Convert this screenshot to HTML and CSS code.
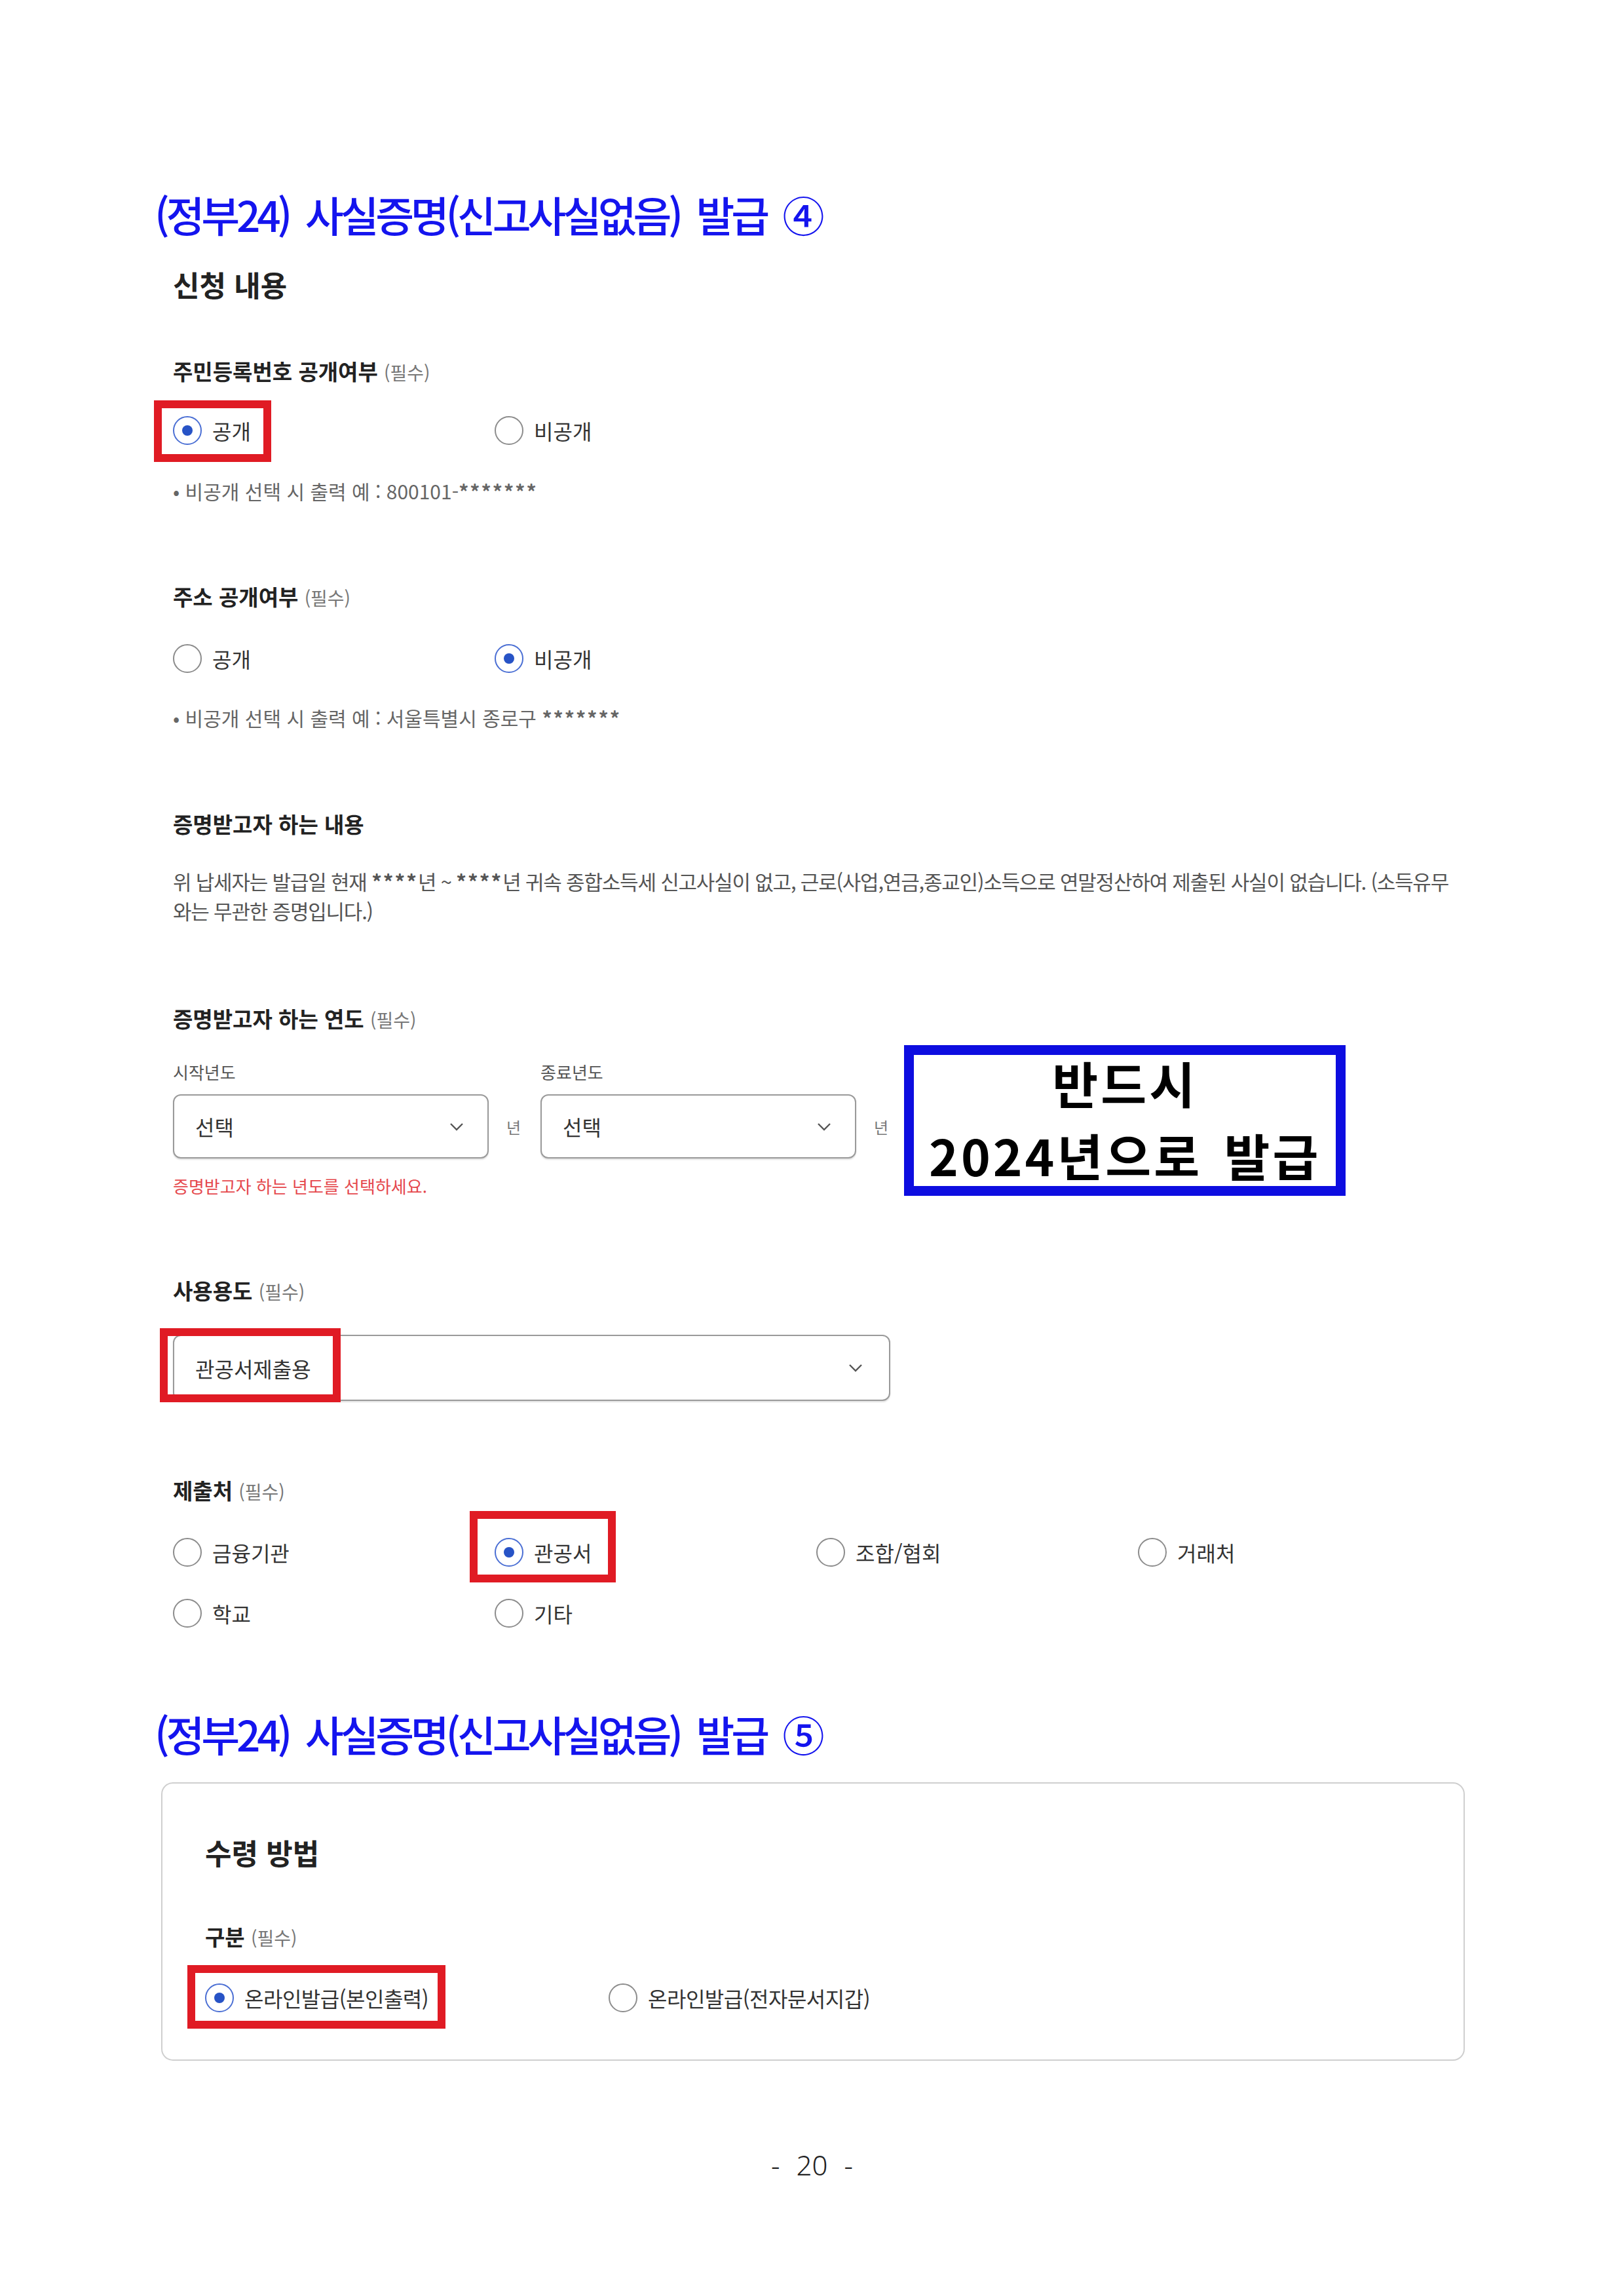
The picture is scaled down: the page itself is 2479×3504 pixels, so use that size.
FILE: index.html
```html
<!doctype html>
<html lang="ko">
  <head>
    <meta charset="UTF-8" />
    <meta name="viewport" content="width=device-width, initial-scale=1.0" />
    <title>(정부24) 사실증명(신고사실없음) 발급</title>
    <link rel="stylesheet" href="styles.css">
  </head>
  <body>
    <main class="Page">
      <h2 class="StepTitle">(정부24) 사실증명(신고사실없음) 발급 ④</h2>

      <section class="Form">
        <h3 class="Form-title">신청 내용</h3>

        <!-- 주민등록번호 -->
        <p class="Label Label--first">주민등록번호 공개여부 <span class="Label-req">(필수)</span></p>
        <div class="Radios Radios--pair">
          <label class="Radio is-checked"><span class="Radio-dot"></span>공개<span class="Mark Mark--id"></span></label>
          <label class="Radio"><span class="Radio-dot"></span>비공개</label>
        </div>
        <p class="Hint">• 비공개 선택 시 출력 예 : 800101-<span class="Stars">*******</span></p>

        <!-- 주소 -->
        <p class="Label Label--addr">주소 공개여부 <span class="Label-req">(필수)</span></p>
        <div class="Radios Radios--pair Radios--addr">
          <label class="Radio"><span class="Radio-dot"></span>공개</label>
          <label class="Radio is-checked"><span class="Radio-dot"></span>비공개</label>
        </div>
        <p class="Hint Hint--addr">• 비공개 선택 시 출력 예 : 서울특별시 종로구 <span class="Stars">*******</span></p>

        <!-- 내용 -->
        <p class="Label Label--content">증명받고자 하는 내용</p>
        <p class="Desc">위 납세자는 발급일 현재 <span class="Stars">****</span>년 ~ <span class="Stars">****</span>년 귀속 종합소득세 신고사실이 없고, 근로(사업,연금,종교인)소득으로 연말정산하여 제출된 사실이 없습니다. (소득유무<br />와는 무관한 증명입니다.)</p>

        <!-- 연도 -->
        <p class="Label Label--year">증명받고자 하는 연도 <span class="Label-req">(필수)</span></p>
        <div class="YearRow">
          <div class="YearGroup">
            <div class="YearPair">
              <div class="YearItem">
                <p class="YearItem-label">시작년도</p>
                <div class="YearItem-line">
                  <div class="Select Select--year">
                    <span>선택</span>
                    <svg class="Select-arrow" width="22" height="13" viewBox="0 0 22 13"><path d="M2 2 L11 11 L20 2" fill="none" stroke="#555" stroke-width="2.4" /></svg>
                  </div>
                  <span class="YearItem-unit">년</span>
                </div>
              </div>
              <div class="YearItem">
                <p class="YearItem-label">종료년도</p>
                <div class="YearItem-line">
                  <div class="Select Select--year">
                    <span>선택</span>
                    <svg class="Select-arrow" width="22" height="13" viewBox="0 0 22 13"><path d="M2 2 L11 11 L20 2" fill="none" stroke="#555" stroke-width="2.4" /></svg>
                  </div>
                  <span class="YearItem-unit">년</span>
                </div>
              </div>
            </div>
            <p class="Error">증명받고자 하는 년도를 선택하세요.</p>
          </div>
          <div class="Notice">
            <span class="Notice-line">반드시</span>
            <span class="Notice-line">2024년으로 발급</span>
          </div>
        </div>

        <!-- 사용용도 -->
        <p class="Label Label--use">사용용도 <span class="Label-req">(필수)</span></p>
        <div class="Select Select--use">
          <span>관공서제출용</span>
          <svg class="Select-arrow" width="22" height="13" viewBox="0 0 22 13"><path d="M2 2 L11 11 L20 2" fill="none" stroke="#555" stroke-width="2.4" /></svg>
          <span class="Mark Mark--use"></span>
        </div>

        <!-- 제출처 -->
        <p class="Label Label--dest">제출처 <span class="Label-req">(필수)</span></p>
        <div class="Radios Radios--grid">
          <label class="Radio"><span class="Radio-dot"></span>금융기관</label>
          <label class="Radio is-checked"><span class="Radio-dot"></span>관공서<span class="Mark Mark--dest"></span></label>
          <label class="Radio"><span class="Radio-dot"></span>조합/협회</label>
          <label class="Radio"><span class="Radio-dot"></span>거래처</label>
          <label class="Radio"><span class="Radio-dot"></span>학교</label>
          <label class="Radio"><span class="Radio-dot"></span>기타</label>
        </div>
      </section>

      <h2 class="StepTitle StepTitle--second">(정부24) 사실증명(신고사실없음) 발급 ⑤</h2>

      <section class="Card">
        <h3 class="Form-title">수령 방법</h3>
        <p class="Label Label--kind">구분 <span class="Label-req">(필수)</span></p>
        <div class="Radios Radios--receive">
          <label class="Radio is-checked"><span class="Radio-dot"></span>온라인발급(본인출력)<span class="Mark Mark--receive"></span></label>
          <label class="Radio"><span class="Radio-dot"></span>온라인발급(전자문서지갑)</label>
        </div>
      </section>
    </main>

    <footer class="PageNumber">- 20 -</footer>
  </body>
</html>
```

FILE: styles.css
```css
:root {
  --color-title: #1414ee;
  --color-text: #222;
  --color-muted: #666;
  --color-mark: #e01b24;
  --color-radio: #8c8c8c;
  --color-radio-on: #4b6fd4;
}

body {
  margin: 0;
  font-family: "Noto Sans CJK KR", "Noto Sans", sans-serif;
  color: var(--color-text);
  background-color: #fff;
}

p,
h2,
h3 {
  margin: 0;
}

.Page {
  padding: 286px 0 0 236px;
}

/* blue step titles */
.StepTitle {
  font-size: 64px;
  line-height: 80px;
  font-weight: 500;
  letter-spacing: -5.2px;
  word-spacing: 12px;
  color: var(--color-title);
  white-space: nowrap;
}
.StepTitle--second {
  margin-top: 120px;
}

.Form {
  margin-left: 28px;
}

.Form-title {
  margin-top: 43px;
  font-size: 44px;
  line-height: 50px;
  font-weight: 700;
}
.Card .Form-title {
  margin-top: 0;
}

/* field labels */
.Label {
  font-size: 33px;
  line-height: 40px;
  font-weight: 700;
}
.Label-req {
  font-size: 28px;
  font-weight: 400;
  color: #777;
}
.Label--first { margin-top: 87px; }
.Label--addr { margin-top: 123px; }
.Label--content { margin-top: 124px; }
.Label--year { margin-top: 122px; }
.Label--use { margin-top: 124px; }
.Label--dest { margin-top: 116px; }
.Label--kind { margin-top: 83px; }

.Hint {
  margin-top: 51px;
  font-size: 30px;
  line-height: 36px;
  color: var(--color-muted);
}
.Hint--addr {
  margin-top: 49px;
}

.Stars {
  font-weight: 700;
  letter-spacing: 2px;
}

.Desc {
  margin-top: 45px;
  font-size: 31px;
  line-height: 45px;
  color: #555;
  letter-spacing: -1.2px;
  white-space: nowrap;
}

/* radios */
.Radios {
  display: grid;
  grid-template-columns: 491px 491px;
  row-gap: 47px;
  margin-top: 46px;
}
.Radios--addr {
  margin-top: 50px;
}
.Radios--grid {
  grid-template-columns: repeat(4, 491px);
  margin-top: 50px;
}
.Radios--receive {
  grid-template-columns: 616px 616px;
  margin-top: 49px;
}

.Radio {
  position: relative;
  display: inline-flex;
  align-items: center;
  gap: 16px;
  height: 46px;
  font-size: 32px;
  color: #333;
}
.Radios--receive .Radio {
  letter-spacing: -0.5px;
}
.Radio-dot {
  position: relative;
  width: 44px;
  height: 44px;
  box-sizing: border-box;
  border: 2px solid var(--color-radio);
  border-radius: 50%;
  background: #fff;
}
.Radio.is-checked .Radio-dot {
  border-color: var(--color-radio-on);
}
.Radio.is-checked .Radio-dot::after {
  content: "";
  position: absolute;
  left: 12px;
  top: 12px;
  width: 16px;
  height: 16px;
  border-radius: 50%;
  background: #2753c6;
}

/* red highlight boxes drawn over the form */
.Mark {
  position: absolute;
  box-sizing: border-box;
  border: 12px solid var(--color-mark);
  pointer-events: none;
}
.Mark--id {
  left: -29px;
  top: -23px;
  width: 179px;
  height: 94px;
}
.Mark--dest {
  left: -38px;
  top: -40px;
  width: 223px;
  height: 109px;
}
.Mark--receive {
  left: -27px;
  top: -27px;
  width: 394px;
  height: 97px;
}
.Mark--use {
  left: -22px;
  top: -12px;
  width: 276px;
  height: 113px;
}

/* selects */
.Select {
  position: relative;
  display: flex;
  align-items: center;
  justify-content: space-between;
  box-sizing: border-box;
  border: 2px solid #9a9a9a;
  border-radius: 12px;
  box-shadow: 0 2px 2px rgba(0, 0, 0, 0.12);
  background: #fff;
  font-size: 32px;
  color: #333;
}
.Select--year {
  width: 482px;
  height: 98px;
  padding: 0 36px 0 32px;
}
.Select--use {
  width: 1095px;
  height: 101px;
  margin-top: 46px;
  padding: 0 40px 0 32px;
}

/* year row */
.YearRow {
  display: flex;
  align-items: flex-start;
  gap: 24px;
  margin-top: 19px;
}
.YearGroup {
  padding-top: 26px;
}
.YearPair {
  display: flex;
  gap: 30px;
}
.YearItem-label {
  font-size: 26px;
  line-height: 30px;
  color: #555;
}
.YearItem-line {
  display: flex;
  align-items: center;
  gap: 27px;
  margin-top: 19px;
}
.YearItem-unit {
  font-size: 24px;
  color: #777;
}
.Error {
  margin-top: 27px;
  font-size: 26px;
  line-height: 30px;
  color: #e5484d;
}

.Notice {
  display: flex;
  flex-direction: column;
  align-items: center;
  justify-content: center;
  width: 674px;
  height: 230px;
  padding-bottom: 6px;
  box-sizing: border-box;
  border: 15px solid #0d0de0;
  font-size: 76px;
  font-weight: 700;
  color: #000;
  white-space: nowrap;
}
.Notice-line {
  line-height: 110px;
  letter-spacing: 4px;
  word-spacing: 8px;
}

/* step 5 card */
.Card {
  width: 1990px;
  margin: 35px 0 0 10px;
  padding: 80px 65px 71px;
  box-sizing: border-box;
  border: 2px solid #cfcfcf;
  border-radius: 18px;
}

.PageNumber {
  margin-top: 134px;
  font-family: "Noto Sans", sans-serif;
  font-size: 42px;
  line-height: 50px;
  font-weight: 300;
  word-spacing: 14px;
  text-align: center;
  color: #222;
}
```
